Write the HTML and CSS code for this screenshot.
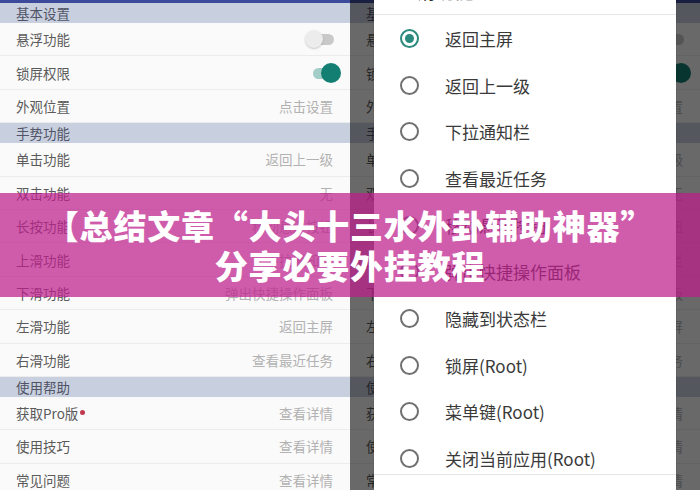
FILE: index.html
```html
<!DOCTYPE html>
<html lang="zh-CN">
<head>
<meta charset="utf-8">
<title>悬浮功能设置</title>
<link rel="stylesheet" href="styles.css">
</head>
<body>
<div class="stage">
  <section class="panel">
    <div class="topbar"></div>
    <div class="group">基本设置</div>
    <div class="row"><span class="label">悬浮功能</span><span class="toggle off"><i></i></span></div>
    <div class="row"><span class="label">锁屏权限</span><span class="toggle on"><i></i></span></div>
    <div class="row"><span class="label">外观位置</span><span class="value">点击设置</span></div>
    <div class="group">手势功能</div>
    <div class="row"><span class="label">单击功能</span><span class="value">返回上一级</span></div>
    <div class="row"><span class="label">双击功能</span><span class="value">无</span></div>
    <div class="row"><span class="label">长按功能</span><span class="value">移动悬浮按钮</span></div>
    <div class="row"><span class="label">上滑功能</span><span class="value">下拉通知栏</span></div>
    <div class="row"><span class="label">下滑功能</span><span class="value">弹出快捷操作面板</span></div>
    <div class="row"><span class="label">左滑功能</span><span class="value">返回主屏</span></div>
    <div class="row"><span class="label">右滑功能</span><span class="value">查看最近任务</span></div>
    <div class="group">使用帮助</div>
    <div class="row"><span class="label">获取Pro版<b class="dot"></b></span><span class="value">查看详情</span></div>
    <div class="row"><span class="label">使用技巧</span><span class="value">查看详情</span></div>
    <div class="row"><span class="label">常见问题</span><span class="value">查看详情</span></div>
  </section>

  <section class="panel dim">
    <div class="topbar"></div>
    <div class="group">基本设置</div>
    <div class="row"><span class="label">悬浮功能</span><span class="toggle off"><i></i></span></div>
    <div class="row"><span class="label">锁屏权限</span><span class="toggle on"><i></i></span></div>
    <div class="row"><span class="label">外观位置</span><span class="value">点击设置</span></div>
    <div class="group">手势功能</div>
    <div class="row"><span class="label">单击功能</span><span class="value">返回上一级</span></div>
    <div class="row"><span class="label">双击功能</span><span class="value">无</span></div>
    <div class="row"><span class="label">长按功能</span><span class="value">移动悬浮按钮</span></div>
    <div class="row"><span class="label">上滑功能</span><span class="value">下拉通知栏</span></div>
    <div class="row"><span class="label">下滑功能</span><span class="value">弹出快捷操作面板</span></div>
    <div class="row"><span class="label">左滑功能</span><span class="value">返回主屏</span></div>
    <div class="row"><span class="label">右滑功能</span><span class="value">查看最近任务</span></div>
    <div class="group">使用帮助</div>
    <div class="row"><span class="label">获取Pro版<b class="dot"></b></span><span class="value">查看详情</span></div>
    <div class="row"><span class="label">使用技巧</span><span class="value">查看详情</span></div>
    <div class="row"><span class="label">常见问题</span><span class="value">查看详情</span></div>

    <div class="dialog">
      <div class="dialog-title">左滑功能</div>
      <ul class="options">
        <li class="opt checked"><span class="radio"></span>返回主屏</li>
        <li class="opt"><span class="radio"></span>返回上一级</li>
        <li class="opt"><span class="radio"></span>下拉通知栏</li>
        <li class="opt"><span class="radio"></span>查看最近任务</li>
        <li class="opt"><span class="radio"></span>移动悬浮按钮</li>
        <li class="opt"><span class="radio"></span>弹出快捷操作面板</li>
        <li class="opt"><span class="radio"></span>隐藏到状态栏</li>
        <li class="opt"><span class="radio"></span>锁屏(Root)</li>
        <li class="opt"><span class="radio"></span>菜单键(Root)</li>
        <li class="opt"><span class="radio"></span>关闭当前应用(Root)</li>
      </ul>
      <div class="dialog-actions"></div>
    </div>
  </section>

  <div class="banner">
    <div class="banner-line">【总结文章“大头十三水外卦辅助神器”</div>
    <div class="banner-line">分享必要外挂教程</div>
  </div>
</div>
</body>
</html>
```

FILE: styles.css
```css
* { box-sizing: border-box; }
html, body { margin: 0; padding: 0; }
body {
  width: 700px;
  height: 490px;
  overflow: hidden;
  background: #fafafa;
  font-family: "Noto Sans CJK SC", "Noto Sans", sans-serif;
}
.stage {
  position: relative;
  display: flex;
  width: 700px;
  height: 490px;
  overflow: hidden;
}
.panel {
  position: relative;
  width: 350px;
  flex: 0 0 350px;
  display: flex;
  flex-direction: column;
  background: #fafafa;
  overflow: hidden;
}
.topbar {
  height: 3px;
  flex: 0 0 3px;
  background: #3c4a9c;
}
.group {
  height: 20px;
  flex: 0 0 20px;
  display: flex;
  align-items: center;
  padding-left: 16px;
  background: #c8cfdf;
  color: #505466;
  font-size: 13.5px;
}
.row {
  height: 33.4px;
  flex: 0 0 33.4px;
  display: flex;
  align-items: center;
  justify-content: space-between;
  padding: 0 17px 0 16px;
  border-bottom: 1px solid #ececec;
  background: #fafafa;
}
.label {
  color: #5a5a5a;
  font-size: 13.5px;
  display: flex;
  align-items: center;
}
.value {
  color: #b2b2b2;
  font-size: 13.5px;
}
.dot {
  width: 5px;
  height: 5px;
  border-radius: 50%;
  background: #c0394f;
  margin-left: 2px;
  margin-bottom: 2px;
}
.toggle {
  position: relative;
  width: 30px;
  height: 20px;
  display: block;
}
.toggle::before {
  content: "";
  position: absolute;
  left: 3px;
  right: 1px;
  top: 5px;
  height: 11px;
  border-radius: 6px;
  background: #c9c9c9;
}
.toggle i {
  position: absolute;
  top: 1px;
  width: 18px;
  height: 18px;
  border-radius: 50%;
}
.toggle.off { margin-right: -2px; }
.toggle.off i { left: 0; background: #ececec; box-shadow: 0 1px 2px rgba(0,0,0,0.2); }
.toggle.on::before { background: #a3cdc7; }
.toggle.on { margin-right: -7px; }
.toggle.on i { right: -1px; top: 0; width: 20px; height: 20px; background: #137e72; }

/* dimmed second screenshot */
.dim::after {
  content: "";
  position: absolute;
  inset: 0;
  background: rgba(0, 0, 0, 0.58);
  z-index: 1;
}
.dialog {
  position: absolute;
  z-index: 2;
  left: 24px;
  width: 302px;
  top: -31px;
  bottom: -40px;
  background: #ffffff;
  box-shadow: 0 0 1px rgba(0,0,0,0.3);
  display: flex;
  flex-direction: column;
}
.dialog-title {
  height: 46px;
  flex: 0 0 46px;
  display: flex;
  align-items: center;
  padding-left: 24px;
  padding-bottom: 2px;
  font-size: 19px;
  color: #2c2c2c;
  border-bottom: 1px solid #e6e6e6;
}
.options {
  list-style: none;
  margin: 0 0 -8px 0;
  padding: 0;
}
.opt {
  height: 46.7px;
  display: flex;
  align-items: center;
  font-size: 17px;
  color: #3a3a3a;
  padding-left: 26px;
}
.radio {
  width: 19px;
  height: 19px;
  border-radius: 50%;
  border: 2px solid #707070;
  margin-right: 26px;
  flex: 0 0 19px;
  display: flex;
  align-items: center;
  justify-content: center;
}
.opt.checked .radio { border-color: #2a8a7e; }
.opt.checked .radio::after {
  content: "";
  width: 9px;
  height: 9px;
  border-radius: 50%;
  background: #2a8a7e;
}
.dialog-actions {
  flex: 1;
  border-top: 1px solid #e6e6e6;
  position: relative;
  z-index: 1;
  background: #fff;
}

/* overlay banner */
.banner {
  position: absolute;
  z-index: 5;
  left: 0;
  right: 0;
  top: 193px;
  height: 104px;
  padding-top: 12px;
  background: rgba(190, 30, 140, 0.72);
  color: #ffffff;
  text-align: center;
  font-weight: 900;
  font-size: 33px;
  letter-spacing: 0.8px;
  line-height: 40px;
}
.banner-line { white-space: nowrap; }
```
